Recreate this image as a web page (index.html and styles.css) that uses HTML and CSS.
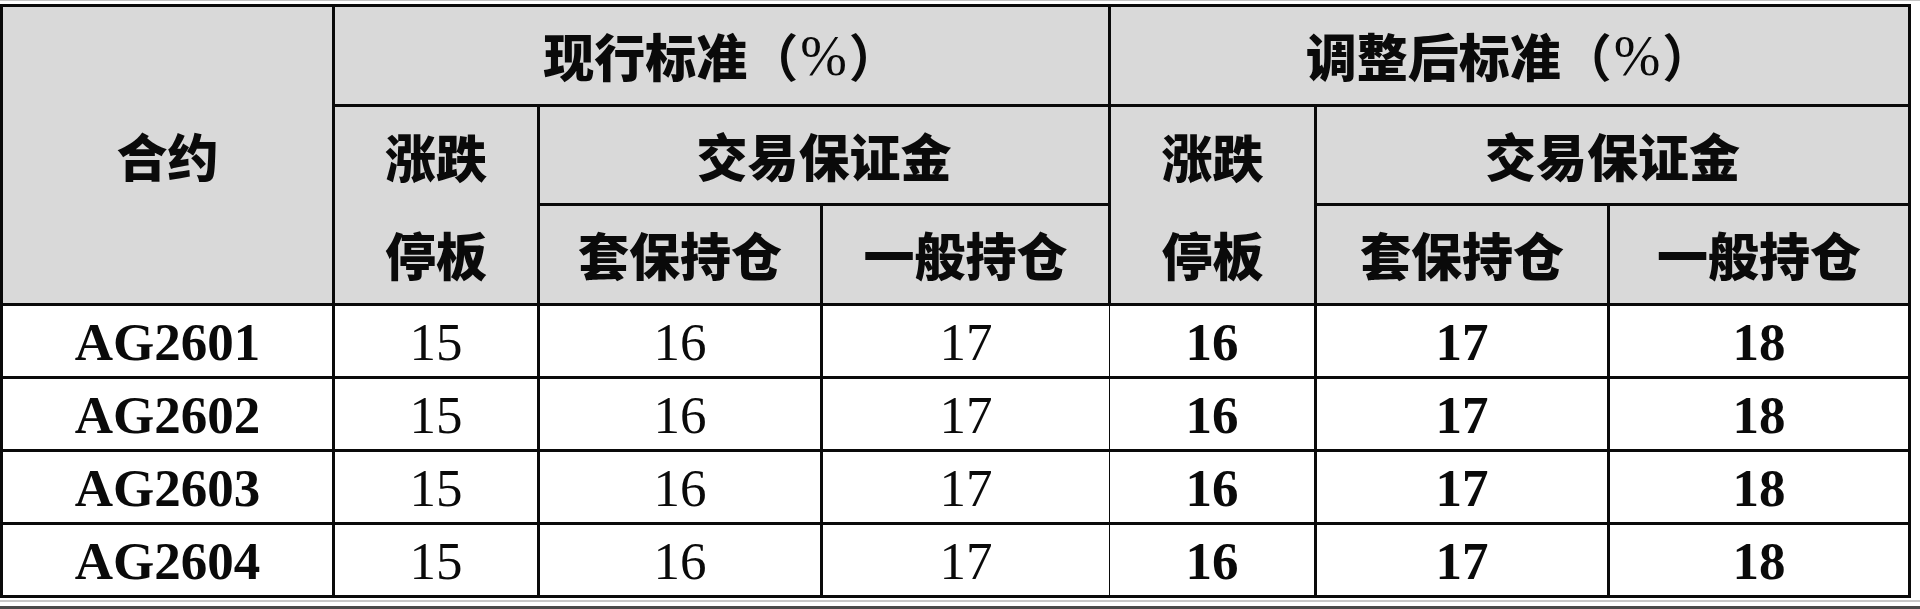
FILE: index.html
```html
<!DOCTYPE html>
<html lang="zh-CN">
<head>
<meta charset="utf-8">
<title>合约保证金标准</title>
<link rel="stylesheet" href="styles.css">
</head>
<body>
<div class="page">
  <div class="grid">
    <div class="cell head c1 r13">合约</div>
    <div class="cell head c24 r1">现行标准<span class="paren">（</span><span class="pct">%</span><span class="paren">）</span></div>
    <div class="cell head c57 r1">调整后标准<span class="paren">（</span><span class="pct">%</span><span class="paren">）</span></div>

    <div class="cell head two c2 r23">涨跌<br>停板</div>
    <div class="cell head c34 r2">交易保证金</div>
    <div class="cell head two c5 r23">涨跌<br>停板</div>
    <div class="cell head c67 r2">交易保证金</div>

    <div class="cell head c3 r3">套保持仓</div>
    <div class="cell head c4 r3">一般持仓</div>
    <div class="cell head c6 r3">套保持仓</div>
    <div class="cell head c7 r3">一般持仓</div>

    <div class="cell data b">AG2601</div>
    <div class="cell data">15</div>
    <div class="cell data">16</div>
    <div class="cell data lt">17</div>
    <div class="cell data b rt">16</div>
    <div class="cell data b">17</div>
    <div class="cell data b">18</div>

    <div class="cell data b">AG2602</div>
    <div class="cell data">15</div>
    <div class="cell data">16</div>
    <div class="cell data lt">17</div>
    <div class="cell data b rt">16</div>
    <div class="cell data b">17</div>
    <div class="cell data b">18</div>

    <div class="cell data b">AG2603</div>
    <div class="cell data">15</div>
    <div class="cell data">16</div>
    <div class="cell data lt">17</div>
    <div class="cell data b rt">16</div>
    <div class="cell data b">17</div>
    <div class="cell data b">18</div>

    <div class="cell data b">AG2604</div>
    <div class="cell data">15</div>
    <div class="cell data">16</div>
    <div class="cell data lt">17</div>
    <div class="cell data b rt">16</div>
    <div class="cell data b">17</div>
    <div class="cell data b">18</div>
  </div>
  <div class="footer"></div>
</div>
</body>
</html>
```
FILE: styles.css
```css
html, body {
  margin: 0;
  padding: 0;
  background: #ffffff;
}

.page {
  width: 1920px;
  height: 609px;
  overflow: hidden;
  box-sizing: border-box;
  border-top: 1px solid #c4c4c4;
  padding-top: 3px;
}

.grid {
  display: grid;
  width: 1911px;
  box-sizing: border-box;
  background: #0a0a0a;
  padding: 3px;
  gap: 3px;
  grid-template-columns: 329px 202px 280px 285px 203px 290px 298px;
  grid-template-rows: 97px 96px 97px 70px 70px 70px 70px;
}

.cell {
  display: flex;
  align-items: center;
  justify-content: center;
  text-align: center;
  color: #0a0a0a;
}

.head {
  background: #d9d9d9;
  font-family: "Noto Sans CJK SC", "Noto Sans", sans-serif;
  font-weight: 900;
  font-size: 51px;
  line-height: 1;
}

.head.two {
  line-height: 98px;
}

.paren {
  font-family: "Noto Sans CJK SC", sans-serif;
  font-weight: 700;
}

.pct {
  font-family: "Liberation Serif", serif;
  font-weight: 400;
  font-size: 56px;
  padding: 0 2px;
}

.c1 { grid-column: 1; }
.c2 { grid-column: 2; }
.c3 { grid-column: 3; }
.c4 { grid-column: 4; }
.c5 { grid-column: 5; }
.c6 { grid-column: 6; }
.c7 { grid-column: 7; }
.c24 { grid-column: 2 / 5; }
.c57 { grid-column: 5 / 8; }
.c34 { grid-column: 3 / 5; }
.c67 { grid-column: 6 / 8; }

.r1 { grid-row: 1; }
.r2 { grid-row: 2; }
.r3 { grid-row: 3; }
.r13 { grid-row: 1 / 4; }
.r23 { grid-row: 2 / 4; }

.data {
  background: #ffffff;
  font-family: "Liberation Serif", "Times New Roman", serif;
  font-size: 53px;
  font-weight: 400;
  line-height: 1;
  padding-top: 2px;
}

.data.b {
  font-weight: 700;
}

.data.lt {
  margin-right: -1px;
}

.data.rt {
  margin-left: -1px;
}

.footer {
  margin-top: 2px;
  width: 1920px;
  height: 4px;
  border-top: 2px solid #c8c8c8;
  border-bottom: 3px solid #4a4a4a;
}
```
